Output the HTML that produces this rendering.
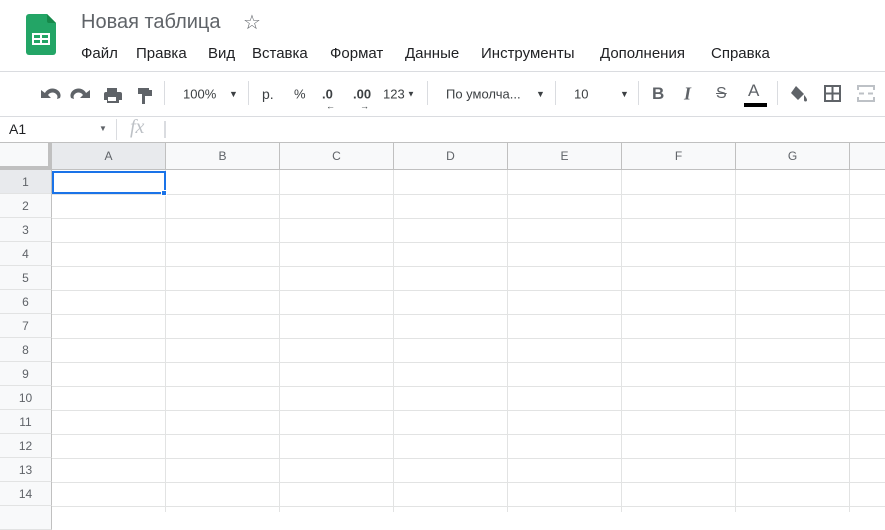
<!DOCTYPE html>
<html><head><meta charset="utf-8"><style>
*{margin:0;padding:0;box-sizing:border-box}
body{width:885px;height:512px;overflow:hidden;background:#fff;font-family:"Liberation Sans",Arial,sans-serif;position:relative;color:#202124}
.a{position:absolute}
.menu span{position:absolute;top:45px;font-size:15px;color:#202124}
.tb{position:absolute;top:94px;transform:translateY(-50%);font-size:13px;color:#3c4043}
.sep{position:absolute;top:81px;width:1px;height:24px;background:#dadce0}
.hl{position:absolute;left:0;width:885px;height:1px;background:#e2e3e3}
.vl{position:absolute;top:170px;width:1px;height:342px;background:#e2e3e3}
.ch{position:absolute;top:143px;height:27px;line-height:27px;text-align:center;font-size:12px;color:#5f6368;border-right:1px solid #c0c0c0;border-bottom:1px solid #c0c0c0;background:#f8f9fa}
.rh{position:absolute;left:0;width:52px;height:24px;line-height:24px;text-align:center;font-size:12px;color:#5f6368;background:#f8f9fa;border-bottom:1px solid #e2e3e3;border-right:1px solid #c0c0c0}
</style></head><body>
<svg class="a" style="left:26px;top:14px" width="30" height="41" viewBox="0 0 30 41"><path d="M3 0h18l9 9v29a3 3 0 0 1-3 3H3a3 3 0 0 1-3-3V3a3 3 0 0 1 3-3z" fill="#23a566"/><path d="M21 0l9 9h-7a2 2 0 0 1-2-2z" fill="#16884a"/><rect x="6" y="19" width="18" height="12" fill="#fff"/><rect x="8" y="21" width="6" height="3" fill="#23a566"/><rect x="16" y="21" width="6" height="3" fill="#23a566"/><rect x="8" y="26" width="6" height="3" fill="#23a566"/><rect x="16" y="26" width="6" height="3" fill="#23a566"/></svg>
<div class="a" style="left:81px;top:11px;font-size:20px;color:#5f6368">Новая таблица</div>
<div class="a" style="left:243px;top:10px;font-size:20px;color:#5f6368">☆</div>
<div class="menu"><span style="left:81px">Файл</span><span style="left:136px">Правка</span><span style="left:208px">Вид</span><span style="left:252px">Вставка</span><span style="left:330px">Формат</span><span style="left:405px">Данные</span><span style="left:481px">Инструменты</span><span style="left:600px">Дополнения</span><span style="left:711px">Справка</span></div>
<div class="hl" style="top:71px;background:#dadce0"></div>
<svg class="a" style="left:40px;top:85px" width="120" height="20" viewBox="0 0 120 20" fill="#5f6368">
<path d="M5 8a8 7 0 0 1 15 5l-3 1a5 4.5 0 0 0-9-4l3 3H1V5z"/>
<path d="M46 8a8 7 0 0 0-15 5l3 1a5 4.5 0 0 1 9-4l-3 3h10V5z"/>
<path d="M67 3h10v4h-10zM64 7h16a2 2 0 0 1 2 2v6h-3v3h-12v-3h-3V9a2 2 0 0 1 2-2zM68 12v4h8v-4z"/>
<path d="M98 3h11v6h-11zM109 5h3v6h-7v8h-3v-10h7z"/>
</svg>
<div class="sep" style="left:164px"></div>
<div class="tb" style="left:183px">100%</div>
<div class="tb" style="left:229px;font-size:9px">▼</div>
<div class="sep" style="left:248px"></div>
<div class="tb" style="left:262px;font-size:14px">р.</div>
<div class="tb" style="left:294px">%</div>
<div class="tb" style="left:322px;font-weight:bold">.0</div>
<div class="tb" style="left:353px;font-weight:bold">.00</div>
<div class="tb" style="left:383px">123</div>
<div class="tb" style="left:407px;font-size:8px">▼</div>
<div class="a" style="left:326px;top:101px;font-size:9px;color:#3c4043">←</div>
<div class="a" style="left:360px;top:101px;font-size:9px;color:#3c4043">→</div>
<div class="sep" style="left:427px"></div>
<div class="tb" style="left:446px">По умолча...</div>
<div class="tb" style="left:536px;font-size:9px">▼</div>
<div class="sep" style="left:555px"></div>
<div class="tb" style="left:574px">10</div>
<div class="tb" style="left:620px;font-size:9px">▼</div>
<div class="sep" style="left:638px"></div>
<div class="tb" style="left:652px;font-size:17px;font-weight:bold;color:#5f6368">B</div>
<div class="tb" style="left:684px;font-size:18px;font-style:italic;font-family:'Liberation Serif',serif;font-weight:bold;color:#5f6368">I</div>
<div class="tb" style="left:716px;font-size:16px;text-decoration:line-through;color:#5f6368">S</div>
<div class="tb" style="left:748px;font-size:17px;top:91px;color:#5f6368">A</div>
<div class="a" style="left:744px;top:103px;width:23px;height:4px;background:#000"></div>
<div class="sep" style="left:777px"></div>
<svg class="a" style="left:789px;top:85px" width="20" height="18" viewBox="0 0 20 18" fill="#5f6368"><path d="M7 1l8 8-6 6-7-7zM15 10c0 0 3 3 3 5a1.5 1.5 0 0 1-3 0z"/></svg>
<svg class="a" style="left:824px;top:85px" width="17" height="17" viewBox="0 0 17 17" fill="none" stroke="#5f6368" stroke-width="2"><rect x="1" y="1" width="15" height="15"/><path d="M8.5 1v15M1 8.5h15"/></svg>
<svg class="a" style="left:857px;top:85px" width="18" height="17" viewBox="0 0 18 17" fill="none" stroke="#bdc1c6" stroke-width="2"><path d="M1 5V1h16v4M1 12v4h16v-4M2 8.5h5M11 8.5h5"/></svg>
<div class="hl" style="top:116px;background:#dadce0"></div>
<div class="a" style="left:9px;top:121px;font-size:14px;color:#202124">A1</div>
<div class="a" style="left:99px;top:124px;font-size:8px;color:#5f6368">▼</div>
<div class="a" style="left:116px;top:119px;width:1px;height:21px;background:#dadce0"></div>
<div class="a" style="left:130px;top:116px;font-size:20px;font-style:italic;font-family:'Liberation Serif',serif;color:#bdc1c6">fx</div>
<div class="a" style="left:164px;top:121px;width:2px;height:17px;background:#dadce0"></div>
<div class="hl" style="top:142px;background:#c0c0c0"></div>
<div class="ch" style="left:0;width:52px;border-right:4px solid #c0c0c0;border-bottom:4px solid #c0c0c0"></div>
<div class="ch" style="left:52px;width:114px;background:#e8eaed">A</div>
<div class="ch" style="left:166px;width:114px">B</div>
<div class="ch" style="left:280px;width:114px">C</div>
<div class="ch" style="left:394px;width:114px">D</div>
<div class="ch" style="left:508px;width:114px">E</div>
<div class="ch" style="left:622px;width:114px">F</div>
<div class="ch" style="left:736px;width:114px">G</div>
<div class="ch" style="left:850px;width:40px"></div>
<div class="hl" style="top:194px"></div><div class="hl" style="top:218px"></div><div class="hl" style="top:242px"></div><div class="hl" style="top:266px"></div><div class="hl" style="top:290px"></div><div class="hl" style="top:314px"></div><div class="hl" style="top:338px"></div><div class="hl" style="top:362px"></div><div class="hl" style="top:386px"></div><div class="hl" style="top:410px"></div><div class="hl" style="top:434px"></div><div class="hl" style="top:458px"></div><div class="hl" style="top:482px"></div><div class="hl" style="top:506px"></div>
<div class="vl" style="left:165px"></div><div class="vl" style="left:279px"></div><div class="vl" style="left:393px"></div><div class="vl" style="left:507px"></div><div class="vl" style="left:621px"></div><div class="vl" style="left:735px"></div><div class="vl" style="left:849px"></div>
<div class="rh" style="top:170px;background:#e8eaed">1</div>
<div class="rh" style="top:194px">2</div><div class="rh" style="top:218px">3</div><div class="rh" style="top:242px">4</div><div class="rh" style="top:266px">5</div><div class="rh" style="top:290px">6</div><div class="rh" style="top:314px">7</div><div class="rh" style="top:338px">8</div><div class="rh" style="top:362px">9</div><div class="rh" style="top:386px">10</div><div class="rh" style="top:410px">11</div><div class="rh" style="top:434px">12</div><div class="rh" style="top:458px">13</div><div class="rh" style="top:482px">14</div><div class="rh" style="top:506px"></div>
<div class="a" style="left:52px;top:171px;width:114px;height:23px;border:2px solid #1a73e8"></div>
<div class="a" style="left:161px;top:190px;width:6px;height:6px;background:#1a73e8;border:1px solid #fff"></div>
</body></html>
